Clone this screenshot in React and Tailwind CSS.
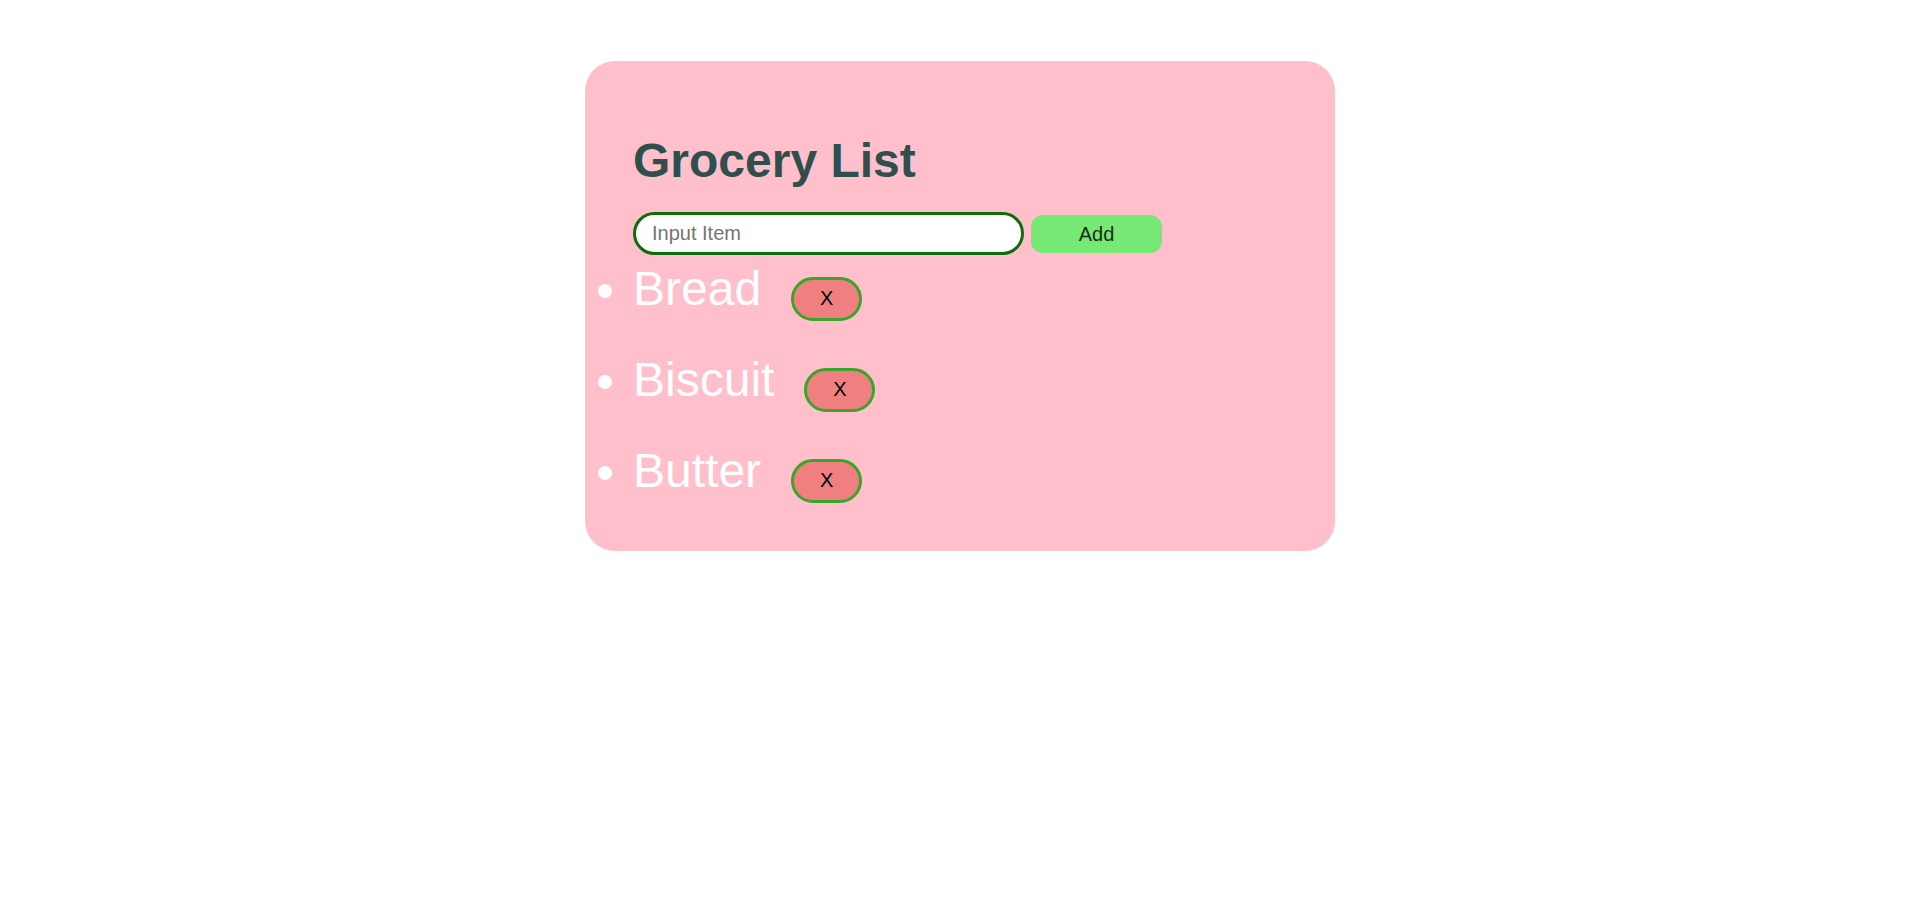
import React, { useState } from "react";

const GroceryList = () => {
    const [items, setItems] = useState(["Bread", "Biscuit", "Butter"]);
    const [value, setValue] = useState("");

    const addItem = () => {
        if (!value.trim()) return;
        setItems([...items, value.trim()]);
        setValue("");
    };

    const removeItem = (index) => {
        setItems(items.filter((_, i) => i !== index));
    };

    return (
        <div className="mx-auto w-[750px] rounded-[30px] bg-[#ffc0cb] pl-[48px] pt-[72px] pb-[48px]">
            <h1 className="text-[48px] font-bold leading-[55px] text-[#2f4f4f]">Grocery List</h1>

            <div className="mt-[24px] flex items-center gap-[7px]">
                <input
                    type="text"
                    value={value}
                    onChange={(e) => setValue(e.target.value)}
                    placeholder="Input Item"
                    className="h-[43px] w-[391px] rounded-full border-[3px] border-[#0b6e0b] bg-white pl-[16px] text-[20px] text-black outline-none placeholder:text-[#757575]"
                />
                <button
                    onClick={addItem}
                    className="h-[38px] w-[131px] rounded-[12px] bg-[#76e874] text-[20px] text-[#1a2e1a]"
                >
                    Add
                </button>
            </div>

            <ul className="mt-[6px] list-disc text-[48px] leading-[normal] text-white marker:text-white">
                {items.map((item, index) => (
                    <li key={index} className="mb-[31px] last:mb-0">
                        {item}
                        <button
                            onClick={() => removeItem(index)}
                            className="ml-[30px] inline-block h-[44px] w-[71px] rounded-full border-[3px] border-[#38a52b] bg-[#f08080] pt-[7px] pb-[8px] align-baseline text-[20px] leading-[23px] text-black"
                        >
                            X
                        </button>
                    </li>
                ))}
            </ul>
        </div>
    );
};

export default function App() {
    return (
        <div className="min-h-[901px] bg-white pt-[61px] font-['Liberation_Sans',Arial,sans-serif]">
            <GroceryList />
        </div>
    );
}
